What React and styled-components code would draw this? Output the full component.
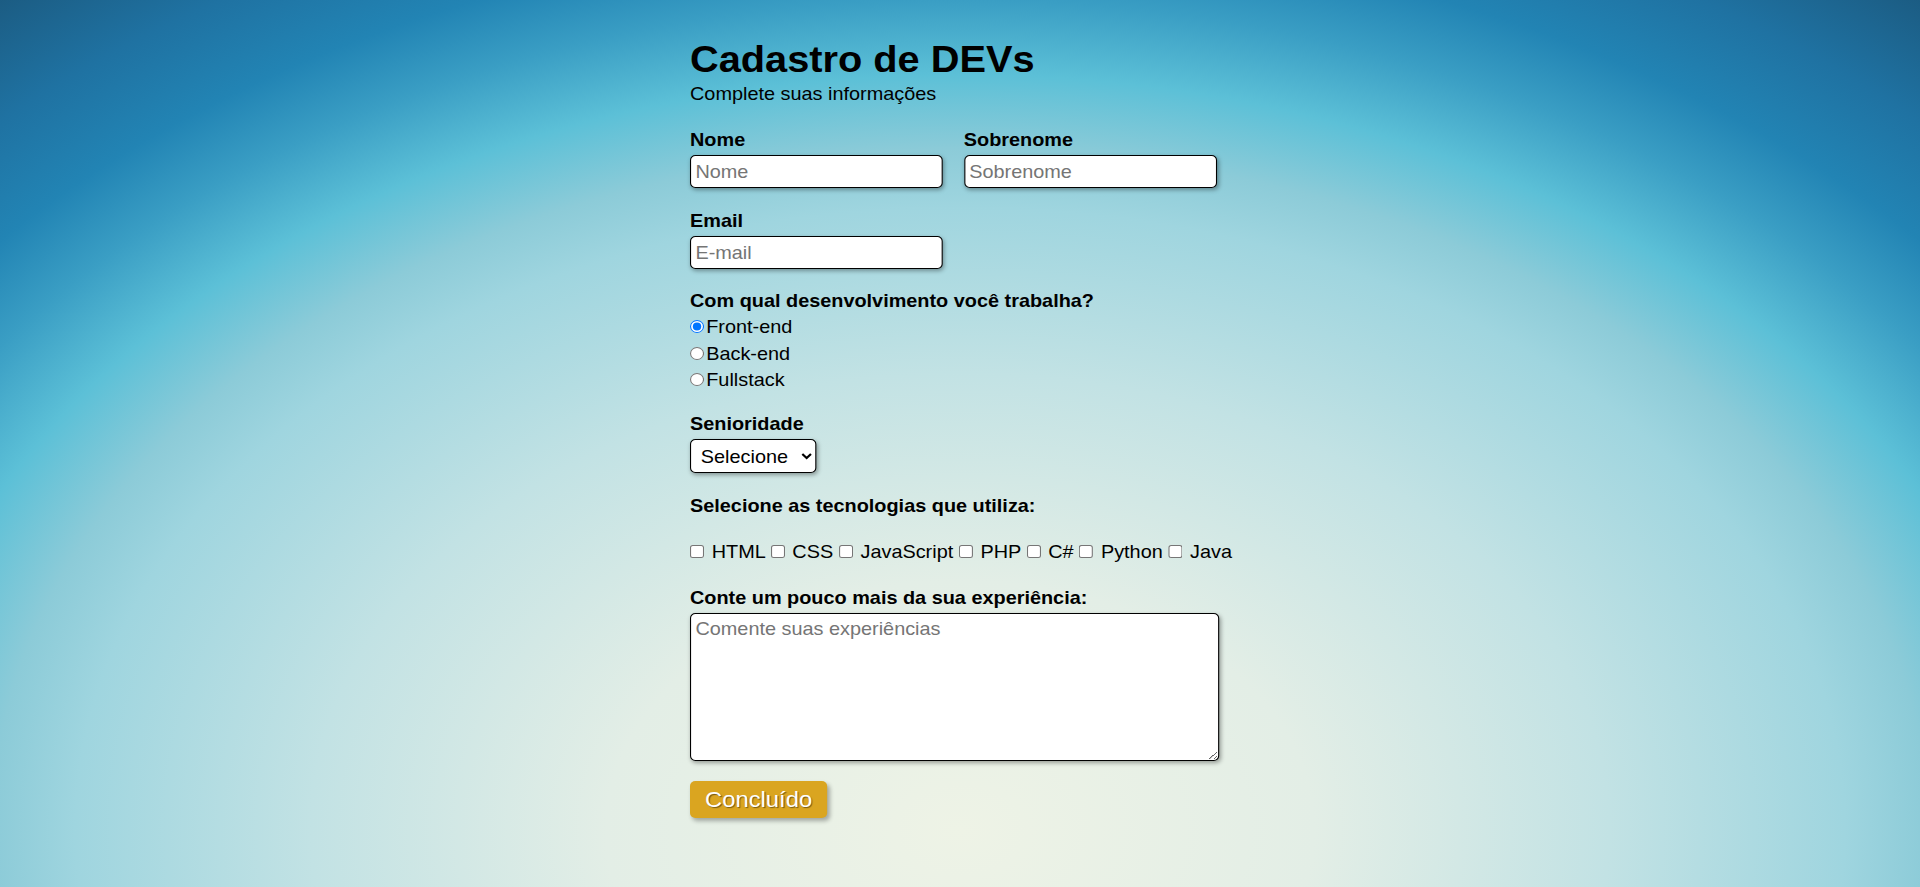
import React from 'react';
import styled, { createGlobalStyle } from 'styled-components';

const GlobalStyle = createGlobalStyle`
    * {
        box-sizing: border-box;
    }
    html, body {
        margin: 0;
        min-height: 100%;
    }
    body {
        min-height: 100vh;
        overflow-x: hidden;
        font-family: "Liberation Sans", Arial, sans-serif;
        font-size: 18.4px;
        color: #000;
        background: radial-gradient(
            ellipse 1180px 830px at 960px 830px,
            #eef3e6 0%,
            #e3eee6 30%,
            #c2e2e4 55%,
            #9fd5df 75%,
            #8ccbd8 82%,
            #5cc0d7 91%,
            #3a9ec4 100%,
            #2284b4 108%,
            #1f72a2 118%,
            #1b5a80 130%
        );
    }
`
// the whole sheet is drawn a little wider than tall, like the capture
const Page = styled.main`
    width: 540px;
    margin: 0 auto;
    padding: 39px 0 40px;
    transform: scaleX(1.08);
    transform-origin: left top;
`
const Title = styled.h1`
    margin: 0;
    font-size: 36.8px;
    font-weight: bold;
    line-height: normal;
`
const Subtitle = styled.p`
    margin: 2px 0 0;
    line-height: 21px;
`
const Form = styled.form`
    display: flex;
    flex-direction: column;
    align-items: flex-start;
`
const Row = styled.div`
    display: flex;
    gap: 19.5px;
    margin-top: ${p => p.$top || 0}px;
`
const Section = styled.div`
    display: flex;
    flex-direction: column;
    align-items: flex-start;
    gap: ${p => p.$gap || 5}px;
    margin-top: ${p => p.$top || 0}px;
`
const Label = styled.label`
    font-weight: bold;
    line-height: 21px;
`
const TextInput = styled.input`
    width: 234px;
    height: 33px;
    margin: 0;
    padding: 0 4px;
    font-family: inherit;
    font-size: 18.4px;
    background: #fff;
    border: 1px solid #000;
    border-radius: 5px;
    box-shadow: 1px 2px 4px rgba(0, 0, 0, 0.35);
    &::placeholder {
        color: #757575;
    }
`
const RadioList = styled.div`
    display: flex;
    flex-direction: column;
    gap: 5.5px;
`
const RadioRow = styled.label`
    display: flex;
    align-items: center;
    line-height: 21px;
    input {
        width: 13px;
        height: 13px;
        margin: 0 2px 0 0;
    }
`
const Select = styled.select`
    height: 34px;
    margin: 0;
    padding: 0 9px 0 5px;
    font-family: inherit;
    font-size: 18.4px;
    color: #000;
    background: #fff;
    border: 1px solid #000;
    border-radius: 5px;
    box-shadow: 1px 2px 4px rgba(0, 0, 0, 0.35);
`
const TechList = styled.div`
    line-height: 21px;
    white-space: nowrap;
    input {
        width: 13px;
        height: 13px;
        margin: 0 2px 2px 0;
        vertical-align: baseline;
    }
`
const TextArea = styled.textarea`
    width: 490px;
    height: 148px;
    margin: 0;
    padding: 4px;
    font-family: inherit;
    font-size: 18.4px;
    background: #fff;
    border: 1px solid #000;
    border-radius: 5px;
    box-shadow: 1px 2px 4px rgba(0, 0, 0, 0.35);
    &::placeholder {
        color: #757575;
    }
`
const SubmitButton = styled.button`
    height: 37px;
    margin-top: 20px;
    padding: 0 14px;
    font-family: inherit;
    font-size: 22px;
    color: #fff;
    background: #daa520;
    border: none;
    border-radius: 5px;
    box-shadow: 2px 3px 4px rgba(0, 0, 0, 0.3);
    text-shadow: 1px 1px 1px rgba(0, 0, 0, 0.45);
    cursor: pointer;
`

const techs = ['HTML', 'CSS', 'JavaScript', 'PHP', 'C#', 'Python', 'Java']

export default function App() {
  return (
    <>
      <GlobalStyle />
      <Page>
        <Title>Cadastro de DEVs</Title>
        <Subtitle>Complete suas informações</Subtitle>
        <Form onSubmit={e => e.preventDefault()}>
          <Row $top={25}>
            <Section>
              <Label htmlFor="nome">Nome</Label>
              <TextInput id="nome" type="text" placeholder="Nome" />
            </Section>
            <Section>
              <Label htmlFor="sobrenome">Sobrenome</Label>
              <TextInput id="sobrenome" type="text" placeholder="Sobrenome" />
            </Section>
          </Row>
          <Section $top={22}>
            <Label htmlFor="email">Email</Label>
            <TextInput id="email" type="email" placeholder="E-mail" />
          </Section>
          <Section $top={21}>
            <Label>Com qual desenvolvimento você trabalha?</Label>
            <RadioList>
              <RadioRow><input type="radio" name="area" defaultChecked />Front-end</RadioRow>
              <RadioRow><input type="radio" name="area" />Back-end</RadioRow>
              <RadioRow><input type="radio" name="area" />Fullstack</RadioRow>
            </RadioList>
          </Section>
          <Section $top={23}>
            <Label htmlFor="senioridade">Senioridade</Label>
            <Select id="senioridade" defaultValue="">
              <option value="">Selecione</option>
              <option value="junior">Júnior</option>
              <option value="pleno">Pleno</option>
              <option value="senior">Sênior</option>
            </Select>
          </Section>
          <Section $top={22} $gap={25}>
            <Label>Selecione as tecnologias que utiliza:</Label>
            <TechList>
              {techs.map((t, i) => (
                <React.Fragment key={t}>
                  <input type="checkbox" id={'tech' + i} /> {t}{i < techs.length - 1 ? ' ' : ''}
                </React.Fragment>
              ))}
            </TechList>
          </Section>
          <Section $top={25}>
            <Label htmlFor="exp">Conte um pouco mais da sua experiência:</Label>
            <TextArea id="exp" placeholder="Comente suas experiências" />
          </Section>
          <SubmitButton type="submit">Concluído</SubmitButton>
        </Form>
      </Page>
    </>
  )
}
